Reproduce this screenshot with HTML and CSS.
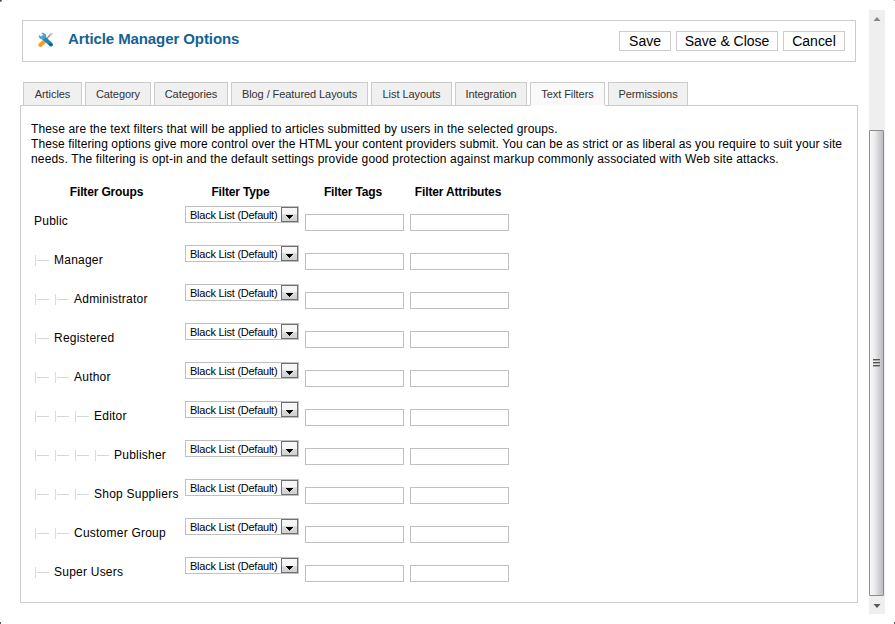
FILE: index.html
```
<!DOCTYPE html>
<html lang="en">
<head>
<meta charset="utf-8">
<title>Article Manager Options</title>
<link rel="stylesheet" href="styles.css">
</head>
<body>
<div class="modal">
  <i class="corner tl"></i><i class="corner tr"></i><i class="corner bl"></i><i class="corner br"></i>
  <main class="content">
    <header class="toolbar">
      <svg class="tools" width="16" height="16" viewBox="0 0 16 16">
        <path d="M13.2 1.8 7.5 8" stroke="#9a9a9a" stroke-width="1.6" fill="none"/>
        <path d="M12.2 3.6 14.5 1.2" stroke="#c5c5c5" stroke-width="1.4" fill="none"/>
        <path d="M2.4 13 7 8.8" stroke="#f7a01f" stroke-width="4" stroke-linecap="round" fill="none"/>
        <path d="M5.2 5.4 13 12.4" stroke="#2386b4" stroke-width="4" stroke-linecap="round" fill="none"/>
        <path d="M3.2.8 5.4 3 4.7 4.5 3 4.6.9 3.1C.4 5.6 2.3 7.8 5 7.4L8.2 5.6C8.9 3.1 6.8.1 3.2.8Z" fill="#47a3d0"/>
        <path d="M11.9 12 13.3 13" stroke="#0f628f" stroke-width="2.4" stroke-linecap="round"/>
      </svg>
      <h1>Article Manager Options</h1>
      <div class="actions">
        <button class="w52">Save</button><button class="w102">Save &amp; Close</button><button class="w62">Cancel</button>
      </div>
    </header>
    <nav class="tabs">
      <a class="t59">Articles</a><a class="t66">Category</a><a class="t74">Categories</a><a class="t137">Blog / Featured Layouts</a><a class="t81">List Layouts</a><a class="t72">Integration</a><a class="t75 active">Text Filters</a><a class="t80">Permissions</a>
    </nav>
    <section class="panel">
      <p class="intro"><span class="l1">These are the text filters that will be applied to articles submitted by users in the selected groups.</span><br><span class="l2">These filtering options give more control over the HTML your content providers submit. You can be as strict or as liberal as you require to suit your site</span><br><span class="l3">needs. The filtering is opt-in and the default settings provide good protection against markup commonly associated with Web site attacks.</span></p>
      <div class="grid head"><b>Filter Groups</b><b class="col">Filter Type</b><b class="col">Filter Tags</b><b class="col">Filter Attributes</b></div>
      <div id="rows"></div>
    </section>
  </main>
  <aside class="scrollbar">
    <svg class="arrow" width="16" height="18" viewBox="0 0 16 18"><path d="M4.5 11h7L8 7Z" fill="#858585"/></svg>
    <div class="thumb"><i></i><i></i><i></i></div>
    <svg class="arrow" width="16" height="18" viewBox="0 0 16 18"><path d="M4.5 8h7L8 12Z" fill="#555"/></svg>
  </aside>
</div>
<script src="rows.js"></script>
</body>
</html>
```
FILE: styles.css
```
* { box-sizing: border-box; }
body { margin: 0; background: #fff; color: #000; font: 12px/15px "Liberation Sans", Arial, sans-serif; }
.modal { position: relative; width: 895px; height: 624px; padding: 10px 10px 10px 20px; display: flex; justify-content: space-between; overflow: hidden; }
.corner { position: absolute; width: 2px; height: 2px; background: #555; }
.tl { left: 0; top: 0; border-radius: 0 0 2px 0; }
.tr { right: 0; top: 0; background: #aaa; width: 1px; height: 1px; }
.bl { left: 0; bottom: 0; width: 1px; }
.br { right: 0; bottom: 0; width: 1px; }
.content { width: 838px; padding-top: 10px; }
.toolbar { margin: 0 2px; height: 42px; border: 1px solid #ccc; display: flex; align-items: center; padding: 0 10px 0 15px; }
.tools { margin-top: -2px; flex: none; }
h1 { margin: -4px 0 0 14px; font-size: 15px; line-height: 20px; letter-spacing: -0.09px; color: #146295; white-space: nowrap; }
.actions { display: flex; gap: 5px; margin-left: auto; }
button { height: 20px; padding: 0; border: 1px solid #ccc; background: #fff; color: #000; font: 14px/18px "Liberation Sans", Arial, sans-serif; letter-spacing: -0.1px; white-space: nowrap; }
button { letter-spacing: -0.02px; }
.w52 { width: 52px; } .w102 { width: 102px; } .w62 { width: 62px; }
.tabs { display: flex; gap: 3px; margin: 20px 0 0 3px; height: 24px; position: relative; }
.tabs a { height: 24px; border: 1px solid #ccc; background: #f0f0f0; color: #333; font-size: 11px; line-height: 23px; letter-spacing: -0.07px; text-align: center; white-space: nowrap; }
.tabs .active { background: #f9f9f9; border-bottom-color: #fff; }
.t59 { width: 59px; } .t66 { width: 66px; } .t74 { width: 74px; } .t137 { width: 137px; } .t81 { width: 81px; } .t72 { width: 72px; } .t75 { width: 75px; } .t80 { width: 80px; }
.panel { margin-top: -1px; height: 498px; border: 1px solid #ccc; padding: 16px 10px 0; }
.intro { margin: 0; white-space: nowrap; }
.l1 { letter-spacing: 0.128px; }
.l2 { letter-spacing: 0.103px; }
.l3 { letter-spacing: 0.155px; }
.grid { display: grid; grid-template-columns: 145px 114px 99px 99px; column-gap: 6px; margin-left: 3px; }
.head { margin-top: 18px; height: 21px; text-align: center; letter-spacing: -0.15px; white-space: nowrap; }
.head .col { padding-right: 3px; }
.row { height: 39px; }
.name { display: flex; align-items: center; height: 15px; margin-top: 8px; letter-spacing: 0.23px; white-space: nowrap; }
.branch { flex: none; width: 20px; height: 11px; display: flex; align-items: center; }
.branch::before { content: ""; width: 1px; height: 11px; margin-left: 1px; background: #d5dde3; }
.branch::after { content: ""; width: 12px; height: 1px; margin-left: 1px; background: #d3d8db; }
.select { width: 114px; height: 17px; border: 1px solid #c0c0c0; display: flex; justify-content: space-between; font-size: 11px; line-height: 17px; letter-spacing: -0.25px; padding-left: 4px; white-space: nowrap; }
.drop { width: 17px; height: 15px; border: 1px solid #707070; background: linear-gradient(#f6f6f6 0 50%, #dedede 50%, #d0d0d0); display: block; flex: none; }
.drop svg { display: block; }
.field { width: 99px; height: 17px; border: 1px solid #c0c0c0; margin: 8px 0 0; padding: 0; background: #fff; }
.scrollbar { width: 16px; height: 604px; background: #efefef; display: flex; flex-direction: column; }
.arrow { display: block; flex: none; }
.arrow:first-child { margin-bottom: 102px; }
.thumb { width: 15px; height: 466px; border: 1px solid #8b8b8b; border-radius: 1px; background: linear-gradient(90deg, #f8f8f8, #ececee 35%, #cdced2 75%, #bcbdc1); display: flex; flex-direction: column; gap: 1px; align-items: center; justify-content: center; }
.thumb i { width: 7px; height: 2px; background: linear-gradient(#555 50%, #aaa 50%); }
```
FILE: rows.js
```
const groups = [['Public', 0], ['Manager', 1], ['Administrator', 2], ['Registered', 1], ['Author', 2], ['Editor', 3], ['Publisher', 4], ['Shop Suppliers', 3], ['Customer Group', 2], ['Super Users', 1]];
document.getElementById('rows').innerHTML = groups.map(([name, depth]) => `
<div class="grid row">
  <div class="name">${'<i class="branch"></i>'.repeat(depth)}<span>${name}</span></div>
  <div class="select"><span class="value">Black List (Default)</span><span class="drop"><svg width="15" height="13" viewBox="0 0 15 13"><path d="M4 7h7v1h-1v1H9v1H8v1H7v-1H6V9H5V8H4Z" fill="#000"/></svg></span></div>
  <input class="field" aria-label="Filter Tags"><input class="field" aria-label="Filter Attributes">
</div>`).join('');
```
